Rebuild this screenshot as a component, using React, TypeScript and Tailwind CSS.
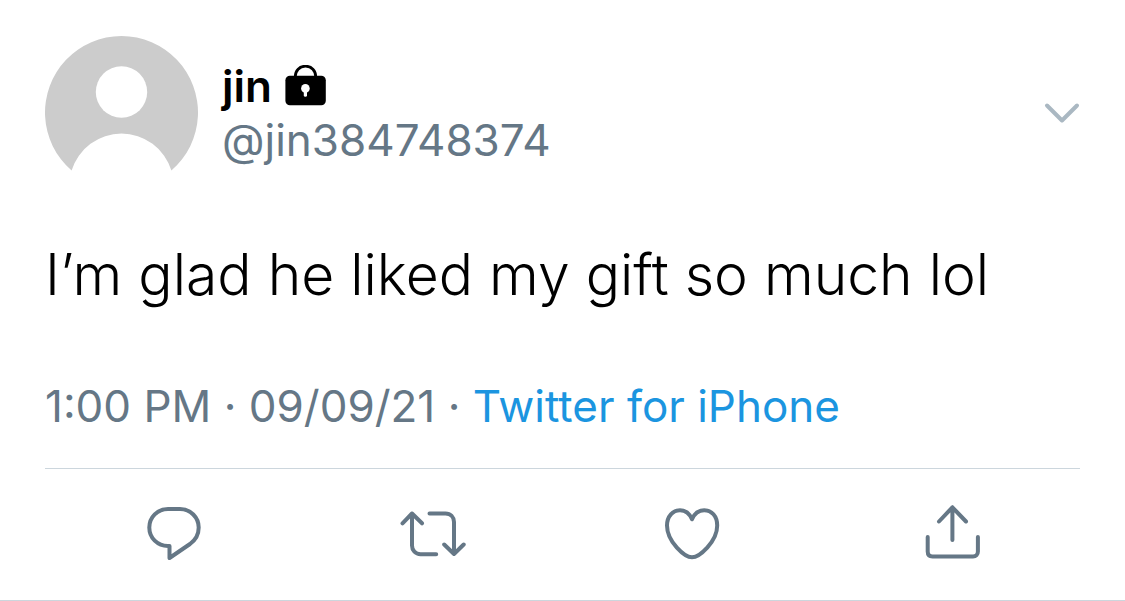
import React from 'react';

const Avatar: React.FC = () => (
  <svg viewBox="0 0 153 153" className="w-[153px] h-[153px] shrink-0" role="img" aria-label="jin">
    <path d="M26.6 134.5A76.5 76.5 0 1 1 126.4 134.5A52.2 52.2 0 0 0 26.6 134.5Z" fill="#cccccc" />
    <circle cx="76.5" cy="56" r="25.7" fill="#ffffff" />
  </svg>
);

const LockIcon: React.FC = () => (
  <svg viewBox="0 0 42 42" className="w-[42px] h-[42px]" role="img" aria-label="Protected account">
    <path d="M10.2 12C10.2 5.5 14.5 1.2 20.5 1.2S30.8 5.5 30.8 12" fill="none" stroke="#000000" strokeWidth="2.8" />
    <rect x="0.4" y="10.7" width="40.4" height="29.5" rx="4.5" />
    <circle cx="20.4" cy="23.4" r="4.3" fill="#ffffff" />
    <path d="M20.4 24V30.2" fill="none" stroke="#ffffff" strokeWidth="3.2" strokeLinecap="round" />
  </svg>
);

interface ActionProps {
  label: string;
  path: string;
}

const ActionButton: React.FC<ActionProps> = ({ label, path }) => (
  <button type="button" aria-label={label} className="cursor-pointer">
    <svg
      viewBox="0 0 66 66"
      className="w-[66px] h-[66px]"
      fill="none"
      stroke="currentColor"
      strokeWidth="4"
      strokeLinecap="round"
      strokeLinejoin="round"
    >
      <path d={path} />
    </svg>
  </button>
);

const actions = [
  {
    label: 'Reply',
    path: 'M27 9H39C49.5 9 57.7 17.5 57.7 27.5C57.7 34 54.5 40 49 44L28.5 58V46H27C16.5 46 8.3 38 8.3 27.5S16.5 9 27 9Z'
  },
  {
    label: 'Retweet',
    path: 'M2.5 23.3L12 13.5L22 23.3M12 13.5V45.5C12 50.5 15.5 54.2 20.5 54.2H36.2M29.5 13.4H45.5C50.5 13.4 54 17 54 22V54M44.2 44.5L54 54L63.7 44.5'
  },
  {
    label: 'Like',
    path: 'M33 57.3C26 57.3 8 42 8 25.5C8 16 14 10.2 21 10.2C27 10.2 31 14.5 33 19.3C35 14.5 39 10.2 45.2 10.2C52.5 10.2 58.2 16 58.2 25.5C58.2 42 40 57.3 33 57.3Z'
  },
  {
    label: 'Share',
    path: 'M21 21.5L34.4 7.3L48 21.5M34.4 7.3V40M9.7 37V51.5C9.7 54.5 11.5 56.4 14.5 56.4H55C58 56.4 59.9 54.5 59.9 51.5V37'
  }
];

const App: React.FC = () => {
  return (
    <article className="bg-white border-b border-[#ccd6dd] pt-9 font-['Inter',sans-serif] text-black">
      <div className="px-[45px]">
        <header className="flex items-center">
          <Avatar />
          <div className="ml-6 flex-1">
            <div className="flex items-center gap-[13px]">
              <h1 className="text-[44px] leading-[54px] font-semibold">jin</h1>
              <LockIcon />
            </div>
            <p className="text-[44px] leading-[54px] text-[#657786]">@jin384748374</p>
          </div>
          <button type="button" aria-label="More options" className="cursor-pointer text-[#aab8c2]">
            <svg
              viewBox="0 0 36 36"
              className="w-9 h-9"
              fill="none"
              stroke="currentColor"
              strokeWidth="4"
              strokeLinecap="round"
              strokeLinejoin="round"
            >
              <path d="M3 10.5L18 25.5L33 10.5" />
            </svg>
          </button>
        </header>

        <p className="mt-[46px] text-[57px] leading-[80px] font-light">I’m glad he liked my gift so much lol</p>

        <p className="mt-16 text-[44px] leading-[54px] text-[#657786]">
          1:00 PM · 09/09/21 ·{' '}
          <a href="#" className="text-[#1b95e0]">
            Twitter for iPhone
          </a>
        </p>

        <footer className="mt-[35px] grid grid-cols-4 justify-items-center border-t border-[#ccd6dd] pt-[31px] pb-[34px] text-[#657786]">
          {actions.map((action) => (
            <ActionButton key={action.label} label={action.label} path={action.path} />
          ))}
        </footer>
      </div>
    </article>
  );
};

export default App;
